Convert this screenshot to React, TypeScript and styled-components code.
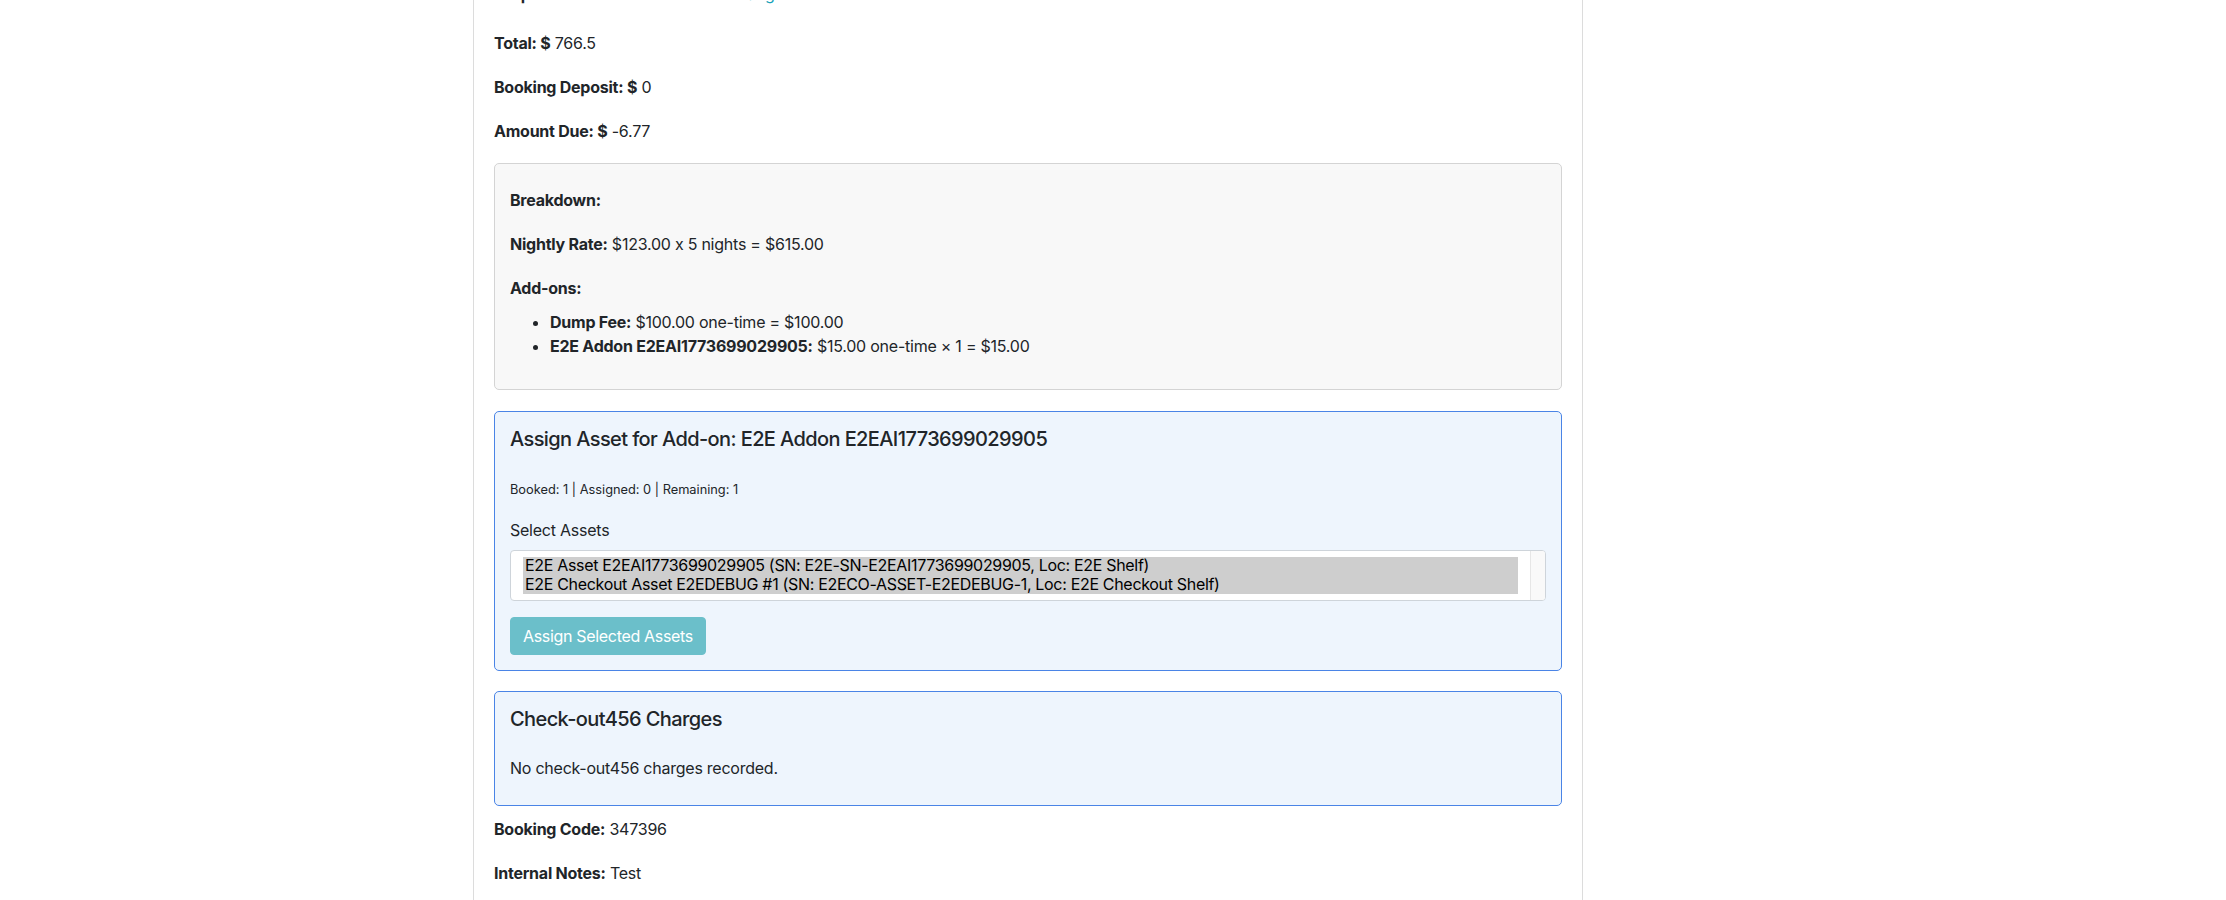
import React from "react"
import styled, { createGlobalStyle } from "styled-components"

const GlobalStyle = createGlobalStyle`
  html, body {
    margin: 0;
    padding: 0;
    background: #fff;
  }
  body {
    font-family: Inter, "Noto Sans", "Liberation Sans", sans-serif;
    font-size: 16px;
    line-height: 1.5;
    letter-spacing: -0.015em;
    font-feature-settings: "calt" 0;
    color: #212529;
  }
  * { box-sizing: border-box; }
`

type Addon = { name: string; detail: string }

const addons: Addon[] = [
  { name: "Dump Fee:", detail: "$100.00 one-time = $100.00" },
  { name: "E2E Addon E2EAI1773699029905:", detail: "$15.00 one-time × 1 = $15.00" }
]

const assetOptions = [
  "E2E Asset E2EAI1773699029905 (SN: E2E-SN-E2EAI1773699029905, Loc: E2E Shelf)",
  "E2E Checkout Asset E2EDEBUG #1 (SN: E2ECO-ASSET-E2EDEBUG-1, Loc: E2E Checkout Shelf)"
]

const App: React.FC = () => {
  return (
    <Page>
      <GlobalStyle />
      <Container>
        <Line $gap={25}>
          <strong>Drop-off Time:</strong> 12:00 PM
          <TextLink href="#">Change Time</TextLink>
        </Line>
        <Line><strong>Total: $</strong> 766.5</Line>
        <Line><strong>Booking Deposit: $</strong> 0</Line>
        <Line><strong>Amount Due: $</strong> -6.77</Line>

        <Breakdown>
          <Line><strong>Breakdown:</strong></Line>
          <Line><strong>Nightly Rate:</strong> $123.00 x 5 nights = $615.00</Line>
          <Line $gap={10}><strong>Add-ons:</strong></Line>
          <AddonList>
            {addons.map((a) => (
              <li key={a.name}>
                <strong>{a.name}</strong> {a.detail}
              </li>
            ))}
          </AddonList>
        </Breakdown>

        <Panel>
          <PanelTitle>Assign Asset for Add-on: E2E Addon E2EAI1773699029905</PanelTitle>
          <Stats>
            <small>Booked: 1 | Assigned: 0 | Remaining: 1</small>
          </Stats>
          <FieldLabel>Select Assets</FieldLabel>
          <ListBox role="listbox" aria-multiselectable="true">
            <Options>
              {assetOptions.map((o) => (
                <Option key={o} role="option" aria-selected="true" $selected>
                  {o}
                </Option>
              ))}
            </Options>
            <ScrollTrack />
          </ListBox>
          <AssignButton disabled>Assign Selected Assets</AssignButton>
        </Panel>

        <Panel $gap={11}>
          <PanelTitle>Check-out456 Charges</PanelTitle>
          <EmptyNote>No check-out456 charges recorded.</EmptyNote>
        </Panel>

        <Line><strong>Booking Code:</strong> 347396</Line>
        <Line><strong>Internal Notes:</strong> Test</Line>
      </Container>
    </Page>
  )
}

export default App

const Page = styled.div`
  display: flex;
  height: 900px;
  overflow: hidden;
  padding-left: 473px;
`

// page is scrolled: the first row sits mostly above the fold
const Container = styled.main`
  width: 1110px;
  min-height: 1000px;
  margin-top: -18px;
  padding: 0 20px;
  border-left: 1px solid #dcdcdc;
  border-right: 1px solid #dcdcdc;
`

const Line = styled.p<{ $gap?: number }>`
  margin: 0 0 ${({ $gap }) => $gap ?? 20}px;
  line-height: 24px;
  strong {
    font-weight: 700;
  }
`

const TextLink = styled.a`
  margin-left: 48px;
  color: #17a2b8;
  text-decoration: none;
`

const Breakdown = styled.section`
  margin-bottom: 21px;
  padding: 24px 15px 15px;
  background: #f8f8f8;
  border: 1px solid #d4d4d4;
  border-radius: 5px;
`

const AddonList = styled.ul`
  margin: 0 0 16px;
  padding-left: 40px;
  line-height: 24px;
  strong {
    font-weight: 700;
  }
`

const Panel = styled.section<{ $gap?: number }>`
  margin-bottom: ${({ $gap }) => $gap ?? 20}px;
  padding: 15px;
  background: #eef5fd;
  border: 1px solid #4a84e6;
  border-radius: 5px;
`

const PanelTitle = styled.h4`
  margin: 0 0 25px;
  font-size: 20px;
  font-weight: 500;
  line-height: 1.2;
  letter-spacing: -0.03em;
`

const Stats = styled.p`
  margin: 0 0 16px;
  line-height: 24px;
  small {
    font-size: 80%;
    letter-spacing: 0;
  }
`

const FieldLabel = styled.label`
  display: block;
  margin-bottom: 8px;
  line-height: 24px;
`

const ListBox = styled.div`
  display: flex;
  margin-bottom: 16px;
  background: #fff;
  border: 1px solid #ced4da;
  border-radius: 4px;
  overflow: hidden;
`

const Options = styled.div`
  flex: 1;
  min-width: 0;
  padding: 6px 12px;
`

const Option = styled.div<{ $selected?: boolean }>`
  padding: 0 2px 1px;
  font-size: 16px;
  line-height: 17.67px;
  letter-spacing: -0.02em;
  color: #000;
  white-space: nowrap;
  overflow: hidden;
  background: ${({ $selected }) => ($selected ? "#cecece" : "transparent")};
`

const ScrollTrack = styled.div`
  width: 15px;
  background: #f9f9f9;
  border-left: 1px solid #e6e6e6;
`

const AssignButton = styled.button`
  display: inline-block;
  padding: 6px 12px;
  font-family: inherit;
  font-size: 16px;
  line-height: 24px;
  letter-spacing: -0.02em;
  color: #fff;
  background: #6bbfca;
  border: 1px solid #6bbfca;
  border-radius: 4px;
  cursor: not-allowed;
`

const EmptyNote = styled.p`
  margin: 0 0 10px;
  line-height: 24px;
`
